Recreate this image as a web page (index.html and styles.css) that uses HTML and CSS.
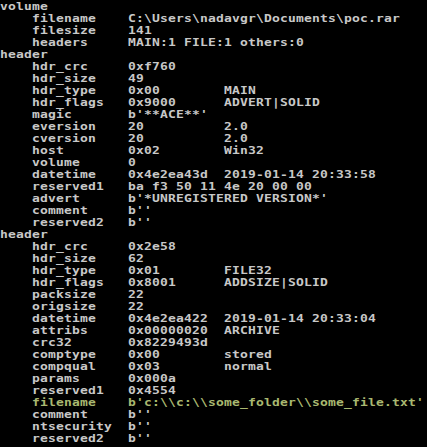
FILE: index.html
```html
<!DOCTYPE html>
<html>
<head>
<meta charset="utf-8">
<link rel="stylesheet" href="styles.css">
</head>
<body>
<div class="console">
<div class="ln"><span>volume</span></div>
<div class="ln"><span>    filename    C:\Users\nadavgr\Documents\poc.rar</span></div>
<div class="ln"><span>    filesize    141</span></div>
<div class="ln"><span>    headers     MAIN:1 FILE:1 others:0</span></div>
<div class="ln"><span>header</span></div>
<div class="ln"><span>    hdr_crc     0xf760</span></div>
<div class="ln"><span>    hdr_size    49</span></div>
<div class="ln"><span>    hdr_type    0x00        MAIN</span></div>
<div class="ln"><span>    hdr_flags   0x9000      ADVERT|SOLID</span></div>
<div class="ln"><span>    magic       b'**ACE**'</span></div>
<div class="ln"><span>    eversion    20          2.0</span></div>
<div class="ln"><span>    cversion    20          2.0</span></div>
<div class="ln"><span>    host        0x02        Win32</span></div>
<div class="ln"><span>    volume      0</span></div>
<div class="ln"><span>    datetime    0x4e2ea43d  2019-01-14 20:33:58</span></div>
<div class="ln"><span>    reserved1   ba f3 50 11 4e 20 00 00</span></div>
<div class="ln"><span>    advert      b'*UNREGISTERED VERSION*'</span></div>
<div class="ln"><span>    comment     b''</span></div>
<div class="ln"><span>    reserved2   b''</span></div>
<div class="ln"><span>header</span></div>
<div class="ln"><span>    hdr_crc     0x2e58</span></div>
<div class="ln"><span>    hdr_size    62</span></div>
<div class="ln"><span>    hdr_type    0x01        FILE32</span></div>
<div class="ln"><span>    hdr_flags   0x8001      ADDSIZE|SOLID</span></div>
<div class="ln"><span>    packsize    22</span></div>
<div class="ln"><span>    origsize    22</span></div>
<div class="ln"><span>    datetime    0x4e2ea422  2019-01-14 20:33:04</span></div>
<div class="ln"><span>    attribs     0x00000020  ARCHIVE</span></div>
<div class="ln"><span>    crc32       0x8229493d</span></div>
<div class="ln"><span>    comptype    0x00        stored</span></div>
<div class="ln"><span>    compqual    0x03        normal</span></div>
<div class="ln"><span>    params      0x000a</span></div>
<div class="ln"><span>    reserved1   0x4554</span></div>
<div class="ln hl"><span>    filename    b'c:\\c:\\some_folder\\some_file.txt'</span></div>
<div class="ln"><span>    comment     b''</span></div>
<div class="ln"><span>    ntsecurity  b''</span></div>
<div class="ln"><span>    reserved2   b''</span></div>
</div>
</body>
</html>
```

FILE: styles.css
```css
html, body {
  margin: 0;
  padding: 0;
  background: #000;
  height: 100%;
  overflow: hidden;
}
.console {
  padding-top: 1px;
  color: #c8c8c8;
  font-family: "DejaVu Sans Mono", "Liberation Mono", monospace;
  font-weight: bold;
  font-size: 13px;
  letter-spacing: 0.174px;
  line-height: 12px;
}
.ln {
  height: 12px;
  white-space: pre;
}
.ln span {
  display: inline-block;
  height: 12px;
  vertical-align: top;
  transform: scaleY(0.78);
  transform-origin: 50% 50%;
}
.hl {
  color: #a9b870;
}
```
